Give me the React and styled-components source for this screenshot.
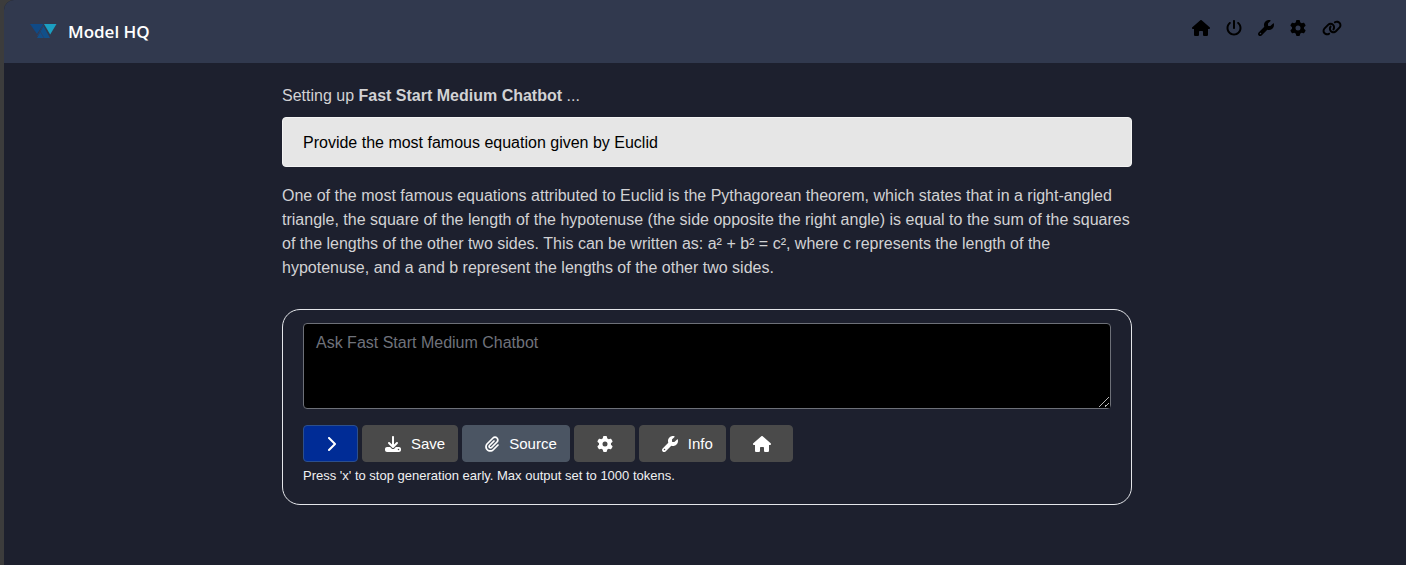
import React from "react";
import styled, { createGlobalStyle } from "styled-components";
import {
  FaHouse, FaPowerOff, FaWrench, FaGear, FaLink, FaDownload, FaPaperclip, FaChevronRight,
} from "react-icons/fa6";

const GlobalStyle = createGlobalStyle`
  *, *::before, *::after { box-sizing: border-box; }
  body {
    margin: 0;
    background: #3c3c3c;
    font-family: "Liberation Sans", Arial, sans-serif;
    font-size: 16px;
    line-height: 24px;
    color: #d2d2d4;
  }
`;

const Page = styled.div`
  min-height: 100vh;
  margin-left: 4px;
  background: #1d202e;
  border-top-left-radius: 10px;
`;

const Header = styled.header`
  display: flex;
  align-items: center;
  justify-content: space-between;
  height: 63px;
  padding: 0 64px 0 26px;
  background: #31394e;
  border-top-left-radius: 10px;
`;

const Brand = styled.a`
  display: flex;
  align-items: center;
  gap: 11px;
  color: #fff;
  text-decoration: none;
  font-family: "Segoe UI", "Open Sans", sans-serif;
  font-size: 17px;
  font-weight: 600;
`;

const Nav = styled.nav`
  display: flex;
  align-items: center;
  gap: 16px;
  padding-bottom: 8px;
`;

const NavLink = styled.a`
  display: flex;
  color: #000;
`;

const IconBox = styled.span`
  display: flex;
  svg {
    width: ${(p) => p.$width}px;
    height: 16px;
  }
`;

const Main = styled.main`
  max-width: 854px;
  margin: 0 auto;
  padding: 21px 0 0 4px;
`;

const Paragraph = styled.p`
  margin: 0;
`;

const Question = styled.div`
  margin: 9px 0 17px;
  padding: 13px 20px 11px;
  border: 1px solid #f3f3f3;
  border-radius: 4px;
  background: #e6e6e6;
  color: #000;
`;

const Composer = styled.form`
  margin-top: 29px;
  padding: 13px 20px 18px;
  border: 1px solid #e4e6ea;
  border-radius: 18px;
`;

const Prompt = styled.textarea`
  display: block;
  width: 100%;
  height: 86px;
  padding: 7px 12px;
  border: 1px solid #6d7078;
  border-radius: 4px;
  background: #000;
  color: #fff;
  font: inherit;
  resize: vertical;
  &::placeholder { color: #6f727b; opacity: 1; }
  &::-webkit-resizer {
    background: linear-gradient(135deg, #000 46%, #b8b8b8 46% 54%, #000 54% 75%, #b8b8b8 75% 83%, #000 83%)
      4px 4px / 10px 10px no-repeat #000;
  }
`;

const Actions = styled.div`
  display: flex;
  flex-wrap: wrap;
  gap: 4px;
  margin-top: 16px;
`;

const tones = {
  primary: ["#002c96", "#2c4f8c"],
  slate: ["#4b5563", "#4b5563"],
  gray: ["#4a4a4a", "#4a4a4a"],
};

const Button = styled.button`
  display: flex;
  align-items: center;
  gap: 10px;
  height: 37px;
  padding: 0 ${(p) => (p.$labelled ? 12 : 21)}px 0 22px;
  border: 1px solid ${(p) => tones[p.$tone][1]};
  border-radius: 4px;
  background: ${(p) => tones[p.$tone][0]};
  color: #fff;
  font: inherit;
  font-size: 15px;
`;

const Hint = styled.p`
  margin: 4px 0 0;
  color: #f0f0f2;
  font-size: 13px;
  line-height: 20px;
`;

const Logo = () => (
  <svg width="27" height="15" viewBox="0 0 27 15" aria-hidden="true">
    <path d="M0 0H13.500L7 10Z" fill="#104a86" />
    <path d="M13.500 2L20 14H7Z" fill="#11508a" />
    <path d="M14 0H26.500L20.200 10.500Z" fill="#1b9fc2" />
    <path d="M13.500 1L7.500 12M10.500 8L14 14" stroke="#28426c" strokeWidth="1" fill="none" />
  </svg>
);

const navItems = [
  ["Home", FaHouse, 18],
  ["Power", FaPowerOff, 16],
  ["Tools", FaWrench, 16],
  ["Settings", FaGear, 16],
  ["Links", FaLink, 20],
];

const actions = [
  { name: "Send", icon: FaChevronRight, width: 10, tone: "primary" },
  { name: "Save", icon: FaDownload, width: 16, tone: "gray", labelled: true },
  { name: "Source", icon: FaPaperclip, width: 14, tone: "slate", labelled: true },
  { name: "Settings", icon: FaGear, width: 16, tone: "gray" },
  { name: "Info", icon: FaWrench, width: 16, tone: "gray", labelled: true },
  { name: "Home", icon: FaHouse, width: 18, tone: "gray" },
];

export default function App() {
  return (
    <>
      <GlobalStyle />
      <Page>
        <Header>
          <Brand href="#"><Logo />Model HQ</Brand>
          <Nav>
            {navItems.map(([name, Icon, width]) => (
              <NavLink key={name} href="#" aria-label={name}>
                <IconBox $width={width}><Icon /></IconBox>
              </NavLink>
            ))}
          </Nav>
        </Header>
        <Main>
          <Paragraph>Setting up <strong>Fast Start Medium Chatbot</strong> ...</Paragraph>
          <Question>Provide the most famous equation given by Euclid</Question>
          <Paragraph>
            One of the most famous equations attributed to Euclid is the Pythagorean theorem, which
            states that in a right-angled triangle, the square of the length of the hypotenuse (the
            side opposite the right angle) is equal to the sum of the squares of the lengths of the
            other two sides. This can be written as: a² + b² = c², where c represents the length of
            the hypotenuse, and a and b represent the lengths of the other two sides.
          </Paragraph>
          <Composer onSubmit={(e) => e.preventDefault()}>
            <Prompt aria-label="Message" placeholder="Ask Fast Start Medium Chatbot" />
            <Actions>
              {actions.map(({ name, icon: Icon, width, tone, labelled }) => (
                <Button
                  key={name}
                  type={name === "Send" ? "submit" : "button"}
                  aria-label={name}
                  $tone={tone}
                  $labelled={labelled}
                >
                  <IconBox $width={width}><Icon /></IconBox>
                  {labelled && name}
                </Button>
              ))}
            </Actions>
            <Hint>Press 'x' to stop generation early. Max output set to 1000 tokens.</Hint>
          </Composer>
        </Main>
      </Page>
    </>
  );
}
